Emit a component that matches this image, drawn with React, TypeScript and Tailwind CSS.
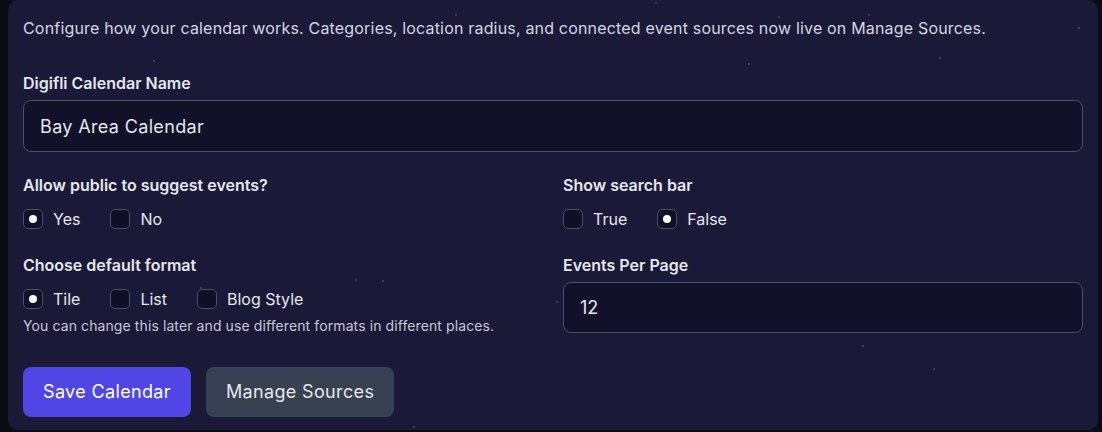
const stars = [
  { x: 107, y: 22 },
  { x: 153, y: 60 },
  { x: 455, y: 14 },
  { x: 655, y: 2 },
  { x: 778, y: 16 },
  { x: 748, y: 63 },
  { x: 868, y: 14 },
  { x: 939, y: 57 },
  { x: 1078, y: 27 },
  { x: 200, y: 287 },
  { x: 355, y: 279 },
  { x: 382, y: 280 },
  { x: 556, y: 301 },
  { x: 862, y: 345 },
  { x: 933, y: 368 },
  { x: 413, y: 426 },
];

function Choice({ label, checked }: { label: string; checked?: boolean }) {
  return (
    <label className="flex items-center gap-[10px] cursor-pointer">
      <span className="flex items-center justify-center w-5 h-5 rounded-[5px] border border-[#4a4f66] bg-[#0f1026]">
        {checked && <span className="w-2 h-2 rounded-full bg-white" />}
      </span>
      <span className="text-base text-[#e5e7eb]">{label}</span>
    </label>
  );
}

function FieldLabel({ children }: { children: React.ReactNode }) {
  return (
    <div className="text-base leading-5 font-semibold text-[#e5e7eb]">
      {children}
    </div>
  );
}

export default function App() {
  return (
    <div
      className="relative w-[1102px] h-[432px] bg-[#0b0b14] overflow-hidden"
      style={{ fontFamily: "Inter, 'Noto Sans', sans-serif" }}
    >
      <div className="relative ml-2 mr-1 h-[430px] rounded-[10px] bg-[#1a1a38] px-[15px] pt-4">
        {stars.map((s, i) => (
          <span
            key={i}
            className="absolute w-[2px] h-[2px] rounded-full bg-[#4b4d6e]"
            style={{ left: s.x - 8, top: s.y }}
          />
        ))}

        <p className="relative text-base leading-6 tracking-[0.18px] text-[#d4d6e0]">
          Configure how your calendar works. Categories, location radius, and
          connected event sources now live on Manage Sources.
        </p>

        {/* Calendar name */}
        <div className="relative mt-[33px]">
          <FieldLabel>Digifli Calendar Name</FieldLabel>
          <input
            type="text"
            defaultValue="Bay Area Calendar"
            className="mt-[7px] w-full h-[52px] px-4 rounded-lg border border-[#4a4f66] bg-[#11122a] text-lg tracking-[0.35px] text-[#e5e7eb] outline-none"
          />
        </div>

        <div className="relative mt-[23px] grid grid-cols-2 gap-x-5 gap-y-5">
          <div>
            <FieldLabel>Allow public to suggest events?</FieldLabel>
            <div className="mt-2 h-8 flex items-center gap-[30px]">
              <Choice label="Yes" checked />
              <Choice label="No" />
            </div>
          </div>
          <div>
            <FieldLabel>Show search bar</FieldLabel>
            <div className="mt-2 h-8 flex items-center gap-[30px]">
              <Choice label="True" />
              <Choice label="False" checked />
            </div>
          </div>
          <div>
            <FieldLabel>Choose default format</FieldLabel>
            <div className="mt-2 h-8 flex items-center gap-[30px]">
              <Choice label="Tile" checked />
              <Choice label="List" />
              <Choice label="Blog Style" />
            </div>
            <p className="mt-0.5 text-sm leading-[18px] tracking-[0.1px] text-[#c5c8d4]">
              You can change this later and use different formats in different
              places.
            </p>
          </div>
          <div>
            <FieldLabel>Events Per Page</FieldLabel>
            <input
              type="text"
              defaultValue="12"
              className="mt-[7px] w-full h-[51px] px-4 rounded-lg border border-[#4a4f66] bg-[#11122a] text-lg text-[#e5e7eb] outline-none"
            />
          </div>
        </div>

        <div className="relative mt-8 flex gap-[15px]">
          <button className="h-[50px] px-5 rounded-lg bg-[#4f46e5] text-lg tracking-[0.35px] text-white">
            Save Calendar
          </button>
          <button className="h-[50px] px-5 rounded-lg bg-[#374151] text-lg tracking-[0.35px] text-[#e5e7eb]">
            Manage Sources
          </button>
        </div>
      </div>
    </div>
  );
}
